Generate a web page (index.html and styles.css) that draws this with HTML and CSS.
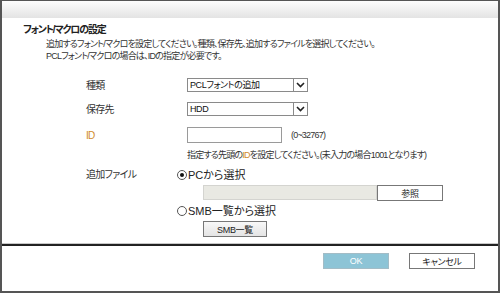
FILE: index.html
```html
<!DOCTYPE html>
<html lang="ja">
<head>
  <meta charset="UTF-8" />
  <title>フォント/マクロの設定</title>
  <link rel="stylesheet" href="styles.css">
</head>
<body>
  <div class="window">
    <div class="titlebar"></div>

    <div class="content">
      <h1 class="title">フォント/マクロの設定</h1>
      <p class="desc">追加するフォント/マクロを設定してください。種類、保存先、追加するファイルを選択してください。<br>PCLフォント/マクロの場合は、IDの指定が必要です。</p>

      <div class="form">
        <div class="row row-select">
          <div class="label">種類</div>
          <div class="select">
            <span class="select-text">PCLフォントの追加</span>
            <span class="arrow"><svg width="9" height="6" viewBox="0 0 9 6"><polyline points="1,1 4.5,4.5 8,1" fill="none" stroke="#222" stroke-width="1.6"/></svg></span>
          </div>
        </div>

        <div class="row row-select second">
          <div class="label">保存先</div>
          <div class="select">
            <span class="select-text">HDD</span>
            <span class="arrow"><svg width="9" height="6" viewBox="0 0 9 6"><polyline points="1,1 4.5,4.5 8,1" fill="none" stroke="#222" stroke-width="1.6"/></svg></span>
          </div>
        </div>

        <div class="row row-id">
          <div class="label label-id">ID</div>
          <div class="id-field">
            <span class="textbox"></span>
            <span class="range">(0~32767)</span>
          </div>
        </div>
        <p class="help">指定する先頭の<span class="hl">ID</span>を設定してください。(未入力の場合1001となります)</p>

        <div class="row row-file">
          <div class="label">追加ファイル</div>
          <div class="file-choices">
            <div class="radio-line"><span class="radio checked"></span>PCから選択</div>
            <div class="browse-line">
              <span class="file-path"></span>
              <span class="btn btn-white">参照</span>
            </div>
            <div class="radio-line"><span class="radio"></span>SMB一覧から選択</div>
            <div class="smb-line"><span class="btn btn-gray">SMB一覧</span></div>
          </div>
        </div>
      </div>
    </div>

    <div class="footer">
      <span class="btn btn-ok">OK</span>
      <span class="btn btn-white">キャンセル</span>
    </div>
  </div>
</body>
</html>
```

FILE: styles.css
```css
body {
  margin: 0;
  font-family: "Liberation Sans", "Noto Sans CJK JP", sans-serif;
  font-feature-settings: "palt";
  font-size: 9px;
  letter-spacing: -0.8px;
  color: #333;
}

.window {
  width: 500px;
  height: 293px;
  box-sizing: border-box;
  border: 1px solid #555;
  border-left-width: 2px;
  border-right-width: 2px;
  border-bottom-width: 2px;
  display: flex;
  flex-direction: column;
  background: white;
}

.titlebar {
  height: 17px;
  background: linear-gradient(#fdfdfd, #e3e3e3);
}

.content {
  flex: 1;
  padding: 5px 0 0 21px;
  border-bottom: 1px solid #c8c8c8;
}

.title {
  margin: 0;
  font-size: 10px;
  letter-spacing: -1.2px;
  line-height: 13px;
  font-weight: bold;
  color: #222;
}

.desc {
  margin: 2px 0 0 23px;
  line-height: 12px;
}

.form {
  margin: 15px 0 0 63px;
}

.row {
  display: flex;
  align-items: center;
}

.label {
  width: 101px;
  flex: none;
  font-size: 10px;
  letter-spacing: -0.7px;
}

.label-id {
  color: #d08a2a;
}

.second {
  margin-top: 9px;
}

.select {
  width: 121px;
  height: 14px;
  box-sizing: border-box;
  border: 1px solid #8a8a8a;
  display: flex;
  align-items: center;
  justify-content: space-between;
  color: #111;
}

.select-text {
  padding-left: 2px;
  line-height: 12px;
  letter-spacing: -0.4px;
}

.arrow {
  width: 14px;
  height: 12px;
  box-sizing: border-box;
  border-left: 1px solid #8a8a8a;
  display: flex;
  align-items: center;
  justify-content: center;
}

.row-id {
  margin-top: 11px;
}

.id-field {
  display: flex;
  align-items: center;
}

.textbox {
  width: 95px;
  height: 16px;
  box-sizing: border-box;
  border: 1px solid #9a9a9a;
}

.range {
  margin-left: 9px;
}

.help {
  margin: 6px 0 0 101px;
  line-height: 12px;
}

.hl {
  color: #d08a2a;
}

.row-file {
  margin-top: 8px;
  align-items: flex-start;
}

.row-file .label {
  line-height: 12px;
}

.file-choices {
  display: flex;
  flex-direction: column;
}

.radio-line {
  display: flex;
  align-items: center;
  margin-left: -10px;
  font-size: 11px;
  letter-spacing: 0;
  line-height: 12px;
  color: #222;
}

.radio {
  width: 8px;
  height: 8px;
  border: 1px solid #555;
  border-radius: 50%;
  margin-right: 1px;
  position: relative;
  background: white;
}

.radio.checked::after {
  content: "";
  position: absolute;
  left: 2px;
  top: 2px;
  width: 4px;
  height: 4px;
  border-radius: 50%;
  background: #111;
}

.browse-line {
  display: flex;
  margin: 4px 0 4px 16px;
}

.file-path {
  width: 174px;
  height: 15px;
  box-sizing: border-box;
  background: #e9e9e3;
  border: 1px solid #d4d4d0;
}

.btn {
  display: inline-flex;
  align-items: center;
  justify-content: center;
  width: 66px;
  height: 16px;
  box-sizing: border-box;
  font-size: 9px;
  letter-spacing: -0.3px;
  color: #222;
}

.btn-white {
  background: white;
  border: 1px solid #777;
}

.btn-gray {
  width: 64px;
  background: linear-gradient(#f8f8f8, #e4e4e4);
  border: 1px solid #777;
}

.smb-line {
  margin: 4px 0 0 16px;
}

.footer {
  height: 47px;
  border-top: 2px solid #222;
  display: flex;
  justify-content: flex-end;
  align-items: flex-start;
  gap: 20px;
  padding: 7px 23px 0 0;
  box-sizing: border-box;
}

.btn-ok {
  background: #8dc4d6;
  border: 1px solid #a3bcc6;
  color: white;
}
```
